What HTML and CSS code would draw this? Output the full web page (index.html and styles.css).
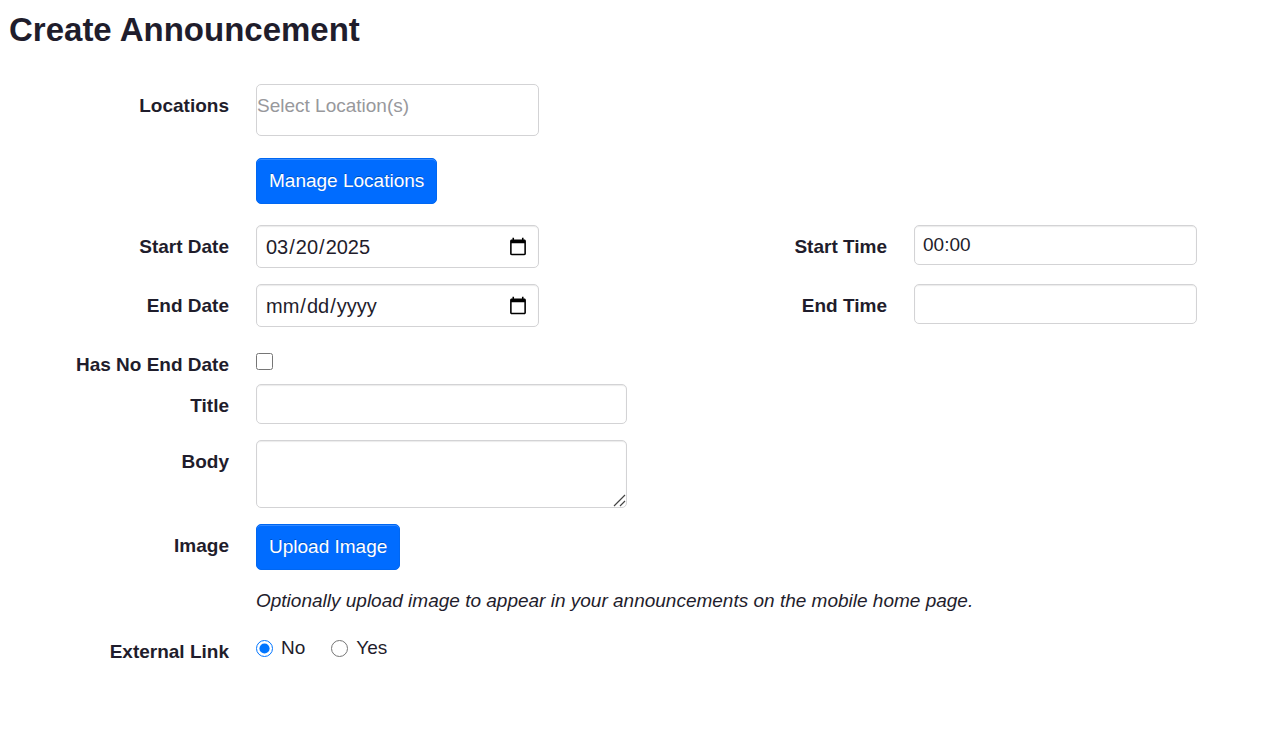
FILE: index.html
```html
<!DOCTYPE html>
<html lang="en">
<head>
    <meta charset="UTF-8">
    <meta name="viewport" content="width=device-width, initial-scale=1.0">
    <title>Create Announcement</title>
    <link rel="stylesheet" href="styles.css">
</head>
<body>
    <h1>Create Announcement</h1>

    <form class="announcement-form">
        <div class="form-row locations-row">
            <label for="locations">Locations</label>
            <input type="text" id="locations" class="form-control locations" placeholder="Select Location(s)">
        </div>
        <div class="form-row manage-row">
            <button type="button" class="btn">Manage Locations</button>
        </div>

        <!-- Dates and times -->
        <div class="form-row">
            <label for="start-date">Start Date</label>
            <input type="date" id="start-date" class="form-control" value="2025-03-20">
            <label for="start-time">Start Time</label>
            <input type="text" id="start-time" class="form-control" value="00:00">
        </div>
        <div class="form-row">
            <label for="end-date">End Date</label>
            <input type="date" id="end-date" class="form-control">
            <label for="end-time">End Time</label>
            <input type="text" id="end-time" class="form-control">
        </div>
        <div class="form-row check-row">
            <label for="no-end-date">Has No End Date</label>
            <input type="checkbox" id="no-end-date">
        </div>

        <!-- Content -->
        <div class="form-row">
            <label for="title">Title</label>
            <input type="text" id="title" class="form-control wide">
        </div>
        <div class="form-row">
            <label for="body">Body</label>
            <textarea id="body" class="form-control wide"></textarea>
        </div>
        <div class="form-row">
            <label for="upload">Image</label>
            <div class="wide-cell">
                <button type="button" id="upload" class="btn">Upload Image</button>
                <p class="hint">Optionally upload image to appear in your announcements on the mobile home page.</p>
            </div>
        </div>
        <div class="form-row" role="radiogroup" aria-labelledby="external-link">
            <span class="row-label" id="external-link">External Link</span>
            <div class="radios">
                <label><input type="radio" name="external" value="no" checked>No</label>
                <label><input type="radio" name="external" value="yes">Yes</label>
            </div>
        </div>
    </form>
</body>
</html>
```
FILE: styles.css
```css
* {
    box-sizing: border-box;
}
body {
    margin: 0;
    padding: 8px 9px;
    background-color: #fff;
    color: #1f1d2c;
    font-family: "Liberation Sans", Arial, sans-serif;
    font-size: 19px;
    line-height: 26px;
}
h1 {
    margin: 0 0 32px;
    font-size: 33px;
    line-height: 44px;
}
.announcement-form {
    padding-right: 74px;
}
.form-row {
    display: grid;
    grid-template-columns: 220px minmax(0, 283px) 1fr minmax(0, 283px);
    column-gap: 27px;
    align-items: start;
    margin-bottom: 16px;
}
.form-row > label,
.row-label {
    padding-top: 9px;
    text-align: right;
    font-weight: bold;
}
.locations-row {
    margin-bottom: 22px;
}
.manage-row {
    margin-bottom: 21px;
}
.manage-row .btn {
    grid-column: 2;
}

/* Inputs */
.form-control {
    width: 100%;
    height: 40px;
    margin: 0;
    padding: 0 8px;
    border: 1px solid #d3d3d5;
    border-radius: 5px;
    background-color: #fff;
    box-shadow: inset 0 1px 1px rgba(0, 0, 0, 0.08);
    color: inherit;
    font: inherit;
}
.form-control[type="date"] {
    height: 43px;
    font-size: 20px;
}
.locations {
    height: 52px;
    padding: 0 0 8px;
    box-shadow: none;
}
.locations::placeholder {
    color: #98989c;
}
.wide {
    grid-column: 2 / -1;
    max-width: 371px;
}
textarea.form-control {
    display: block;
    height: 68px;
    resize: both;
}
textarea::-webkit-resizer {
    background: url("data:image/svg+xml,%3Csvg xmlns='http://www.w3.org/2000/svg' width='15' height='15'%3E%3Cpath d='M3 14L14 3M9 14L14 9' stroke='%23444' stroke-width='1.2'/%3E%3C/svg%3E") no-repeat;
}
input[type="checkbox"],
input[type="radio"] {
    width: 17px;
    height: 17px;
    margin: 0;
    accent-color: #0075ff;
}
.check-row {
    height: 41px;
    margin-bottom: 0;
}
.check-row input {
    margin-top: 10px;
}

/* Buttons */
.btn {
    justify-self: start;
    display: block;
    height: 46px;
    padding: 0 12px;
    border: 1px solid #0067f2;
    border-radius: 5px;
    background-color: #006cff;
    box-shadow: inset 0 1px 0 rgba(255, 255, 255, 0.2);
    color: #fff;
    font: inherit;
    text-shadow: 0 -1px 0 rgba(0, 0, 0, 0.25);
    cursor: pointer;
}

.wide-cell,
.radios {
    grid-column: 2 / -1;
}
.hint {
    margin: 18px 0 0;
    font-style: italic;
}
.radios {
    display: flex;
    gap: 26px;
    padding-top: 5px;
}
.radios label {
    display: flex;
    align-items: center;
    gap: 8px;
}
```
